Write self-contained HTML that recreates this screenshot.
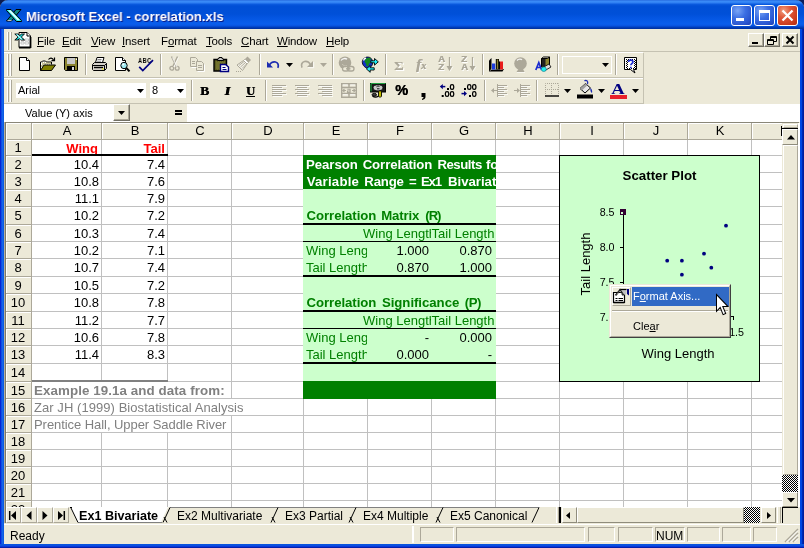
<!DOCTYPE html>
<html><head><meta charset="utf-8"><title>Microsoft Excel - correlation.xls</title>
<style>
html,body{margin:0;padding:0;background:#ECE9D8;}
body{width:804px;height:548px;overflow:hidden;font-family:"Liberation Sans",sans-serif;}
#root{position:relative;width:804px;height:548px;overflow:hidden;background:#ECE9D8;}
#root div{position:absolute;box-sizing:border-box;}
#root svg{position:absolute;overflow:visible;}
.t{white-space:nowrap;font-size:11px;line-height:13px;color:#000;}
.c{white-space:nowrap;font-size:13px;line-height:15px;color:#000;}
.u{text-decoration:underline;}
.hdr{background:#ECE9D8;}
.sunk{border:1px solid;border-color:#ACA899 #fff #fff #ACA899;}
.btn{background:#ECE9D8;border:1px solid;border-color:#fff #716F64 #716F64 #fff;box-shadow:inset -1px -1px 0 #ACA899;}
.t,.c{will-change:transform;}
.btn2{background:#ECE9D8;border:1px solid;border-color:#fff #8F8C7C #8F8C7C #fff;}

</style></head>
<body>
<div id="root">
<div style="left:0px;top:29px;width:4px;height:519px;background:linear-gradient(to right,#0019CF 0,#0831D9 25%,#166AEE 50%,#0855DD 100%);"></div>
<div style="left:800px;top:29px;width:4px;height:519px;background:linear-gradient(to right,#0046E4 0,#0044E0 45%,#0028B4 60%,#001894 100%);"></div>
<div style="left:0px;top:544px;width:804px;height:4px;background:linear-gradient(to bottom,#0855DD 0,#0A4FE0 40%,#0831D9 70%,#00138C 100%);"></div>
<div style="left:0px;top:0px;width:804px;height:29px;background:linear-gradient(to bottom,#1F60D8 0px,#3D8EF8 1px,#2E7EF2 3px,#0C5CE0 4px,#004FD6 6px,#0050D8 14px,#0456E2 18px,#0A5EEC 24px,#0852DE 26px,#0040C0 27px,#002E9A 29px);border-radius:7px 7px 0 0;"></div>
<svg style="left:0;top:0" width="804" height="8"><path d="M0 0h8a8 8 0 0 0-8 8z" fill="#0A1A50"/><path d="M804 0h-8a8 8 0 0 1 8 8z" fill="#0A1D5C"/></svg>
<svg style="left:6px;top:9px" width="16" height="13" viewBox="0 0 16 13">
<path d="M10 0.500h5L5.500 12H0.500z" fill="#108888" stroke="#000" stroke-width="1"/>
<path d="M0.500 0.500h4.500L15.500 11.500v1h-5L0.500 1.500z" fill="#20E0E0" stroke="#000" stroke-width="1"/>
<path d="M2 1.200h2.500L14 11.300h-2.500z" fill="#E8FFFF"/>
<path d="M1.500 11.500h4" stroke="#C0C0C0" stroke-width="1"/>
</svg>
<div class="t ttl" style="left:25.5px;top:8.5px;font-weight:bold;font-size:13.600px;line-height:16px;color:#fff;text-shadow:1px 1px 0 #0A1883;transform-origin:0 0;transform:scaleX(0.962);">Microsoft Excel - correlation.xls</div>
<div style="left:731px;top:5px;width:21px;height:21px;background:radial-gradient(circle at 30% 25%,#7AA5F5 0,#3C6FE3 40%,#2A55CF 75%,#1E3FB4 100%);border:1px solid #fff;border-radius:3px;"></div>
<div style="left:754px;top:5px;width:21px;height:21px;background:radial-gradient(circle at 30% 25%,#7AA5F5 0,#3C6FE3 40%,#2A55CF 75%,#1E3FB4 100%);border:1px solid #fff;border-radius:3px;"></div>
<div style="left:777px;top:5px;width:21px;height:21px;background:radial-gradient(circle at 30% 25%,#F0A080 0,#E0583A 35%,#C93A1C 75%,#B02A10 100%);border:1px solid #fff;border-radius:3px;"></div>
<div style="left:736px;top:18px;width:8px;height:3px;background:#fff;"></div>
<div style="left:759px;top:10px;width:11px;height:11px;border:1px solid #fff;border-top:3px solid #fff;"></div>
<svg style="left:777px;top:5px" width="21" height="21"><path d="M5.5 5.5l10 10M15.5 5.5l-10 10" stroke="#fff" stroke-width="2.3" stroke-linecap="butt"/></svg>
<div style="left:4px;top:29px;width:796px;height:23px;background:#ECE9D8;"></div>
<div style="left:4px;top:51px;width:796px;height:1px;background:#C5C2B2;"></div>
<div style="left:7px;top:32px;width:1px;height:18px;background:#fff;"></div>
<div style="left:8px;top:32px;width:1px;height:18px;background:#ACA899;"></div>
<div style="left:10px;top:32px;width:1px;height:18px;background:#fff;"></div>
<div style="left:11px;top:32px;width:1px;height:18px;background:#ACA899;"></div>
<svg style="left:14px;top:31px" width="18" height="18" viewBox="0 0 18 18">
<path d="M5 1.500h8l3.500 3.500v11.500H5z" fill="#fff" stroke="#000" stroke-width="1"/>
<path d="M5 16.500h11.500M16.500 6v11" stroke="#000" stroke-width="1.800"/>
<path d="M13 1.500v3.500h3.500" fill="#fff" stroke="#000" stroke-width="1"/>
<path d="M7 8h3v2H7zM11 8h3.500v2H11zM7 11h3v2H7zM11 11h3.500v2H11z" fill="none" stroke="#C0C0C0" stroke-width=".9"/>
<path d="M0.800 3h3.200l1.700 1.600L7.500 3h3L7.300 6l3.200 3H7.300L5.600 7.400 4 9H0.800l3.300-3z" fill="#18D0D0" stroke="#000" stroke-width=".9"/>
<path d="M1.800 3.500h1.800l5 5H6.800z" fill="#B0FFFF"/>
</svg>
<div class="t menu" style="left:36.5px;top:35px;font-size:11.500px;letter-spacing:-0.15px;"><span class="u">F</span>ile</div>
<div class="t menu" style="left:61.5px;top:35px;font-size:11.500px;letter-spacing:-0.15px;"><span class="u">E</span>dit</div>
<div class="t menu" style="left:90.5px;top:35px;font-size:11.500px;letter-spacing:-0.15px;"><span class="u">V</span>iew</div>
<div class="t menu" style="left:122px;top:35px;font-size:11.500px;letter-spacing:-0.15px;"><span class="u">I</span>nsert</div>
<div class="t menu" style="left:160.5px;top:35px;font-size:11.500px;letter-spacing:-0.15px;">F<span class="u">o</span>rmat</div>
<div class="t menu" style="left:205.5px;top:35px;font-size:11.500px;letter-spacing:-0.15px;"><span class="u">T</span>ools</div>
<div class="t menu" style="left:240.5px;top:35px;font-size:11.500px;letter-spacing:-0.15px;"><span class="u">C</span>hart</div>
<div class="t menu" style="left:277px;top:35px;font-size:11.500px;letter-spacing:-0.15px;"><span class="u">W</span>indow</div>
<div class="t menu" style="left:325.5px;top:35px;font-size:11.500px;letter-spacing:-0.15px;"><span class="u">H</span>elp</div>
<div class="btn" style="left:748px;top:33px;width:16px;height:14px;"></div>
<div class="btn" style="left:764px;top:33px;width:16px;height:14px;"></div>
<div class="btn" style="left:782px;top:33px;width:16px;height:14px;"></div>
<div style="left:752px;top:42px;width:6px;height:2px;background:#000;"></div>
<svg style="left:764px;top:33px" width="16" height="14"><path d="M6.5 3.5h6v5h-6zM6.5 4.5h6" fill="none" stroke="#000" stroke-width="1"/><path d="M3.5 6.5h6v5h-6z" fill="#ECE9D8" stroke="#000" stroke-width="1"/><path d="M3.5 7.5h6" stroke="#000" stroke-width="1"/></svg>
<svg style="left:782px;top:33px" width="16" height="14"><path d="M4.5 3.5l7 7M11.5 3.5l-7 7" stroke="#000" stroke-width="2"/></svg>
<div style="left:4px;top:52px;width:796px;height:52px;background:#ECE9D8;"></div>
<div style="left:4px;top:52px;width:639px;height:1px;background:#fff;"></div>
<div style="left:4px;top:77px;width:640px;height:1px;background:#C5C2B2;"></div>
<div style="left:4px;top:78px;width:639px;height:1px;background:#fff;"></div>
<div style="left:4px;top:103px;width:640px;height:1px;background:#C5C2B2;"></div>
<div style="left:643px;top:53px;width:1px;height:51px;background:#C5C2B2;"></div>
<div style="left:7px;top:54px;width:1px;height:22px;background:#fff;"></div>
<div style="left:8px;top:54px;width:1px;height:22px;background:#ACA899;"></div>
<div style="left:10px;top:54px;width:1px;height:22px;background:#fff;"></div>
<div style="left:11px;top:54px;width:1px;height:22px;background:#ACA899;"></div>
<div style="left:7px;top:80px;width:1px;height:22px;background:#fff;"></div>
<div style="left:8px;top:80px;width:1px;height:22px;background:#ACA899;"></div>
<div style="left:10px;top:80px;width:1px;height:22px;background:#fff;"></div>
<div style="left:11px;top:80px;width:1px;height:22px;background:#ACA899;"></div>
<svg style="left:18px;top:56px" width="16" height="16" viewBox="0 0 16 16"><path d="M1.5 1.5h7l3 3v10h-10z" fill="#fff" stroke="#000"/><path d="M8.5 1.5v3h3" fill="#fff" stroke="#000"/></svg>
<svg style="left:40px;top:56px" width="16" height="16" viewBox="0 0 16 16"><path d="M8.500 3.500c1.500-2 4-2 5 0.500" fill="none" stroke="#000" stroke-width="1.200"/><path d="M14.500 1.500v3.200h-3" fill="none" stroke="#000" stroke-width="1.200"/><path d="M0.500 14.500v-8.500h1l1-1h3l1 1h5v2.500" fill="#FFFFFF" stroke="#000"/><path d="M2 7h1M4 7h1M6 7h1M8 7h1M10 7h1M3 8h1M5 8h1M7 8h1M9 8h1M2 9h1M2 11h1M1 10h1" stroke="#8A8430" stroke-width="1"/><path d="M0.500 14.500l3.500-5.500h11.500l-4 5.500z" fill="#808000" stroke="#000"/></svg>
<svg style="left:63px;top:56px" width="16" height="16" viewBox="0 0 16 16"><path d="M1.5 1.5h13v13h-12l-1-1z" fill="#8A8430" stroke="#000"/><rect x="4" y="2" width="8" height="6" fill="#C8C8C8"/><rect x="4" y="10" width="8" height="4.5" fill="#000"/><rect x="9" y="11" width="2" height="3" fill="#D8D8D8"/><rect x="12.8" y="2.5" width="1.2" height="1.5" fill="#fff"/></svg>
<div style="left:85px;top:54px;width:1px;height:21px;background:#ACA899;"></div>
<div style="left:86px;top:54px;width:1px;height:21px;background:#fff;"></div>
<svg style="left:91px;top:56px" width="16" height="16" viewBox="0 0 16 16"><path d="M4.5 6.5l1.5-5h7l-1.5 5" fill="#fff" stroke="#000"/><path d="M6.5 3.5h4M6 5.2h4" stroke="#666" stroke-width=".8"/><path d="M1.5 8.5l2-2h11l1 1v5l-2 2h-11l-1-1z" fill="#D4D0C8" stroke="#000"/><path d="M1.5 9.5h12l2-2M13.5 9.5v5" fill="none" stroke="#000"/><path d="M3 11.5h9" stroke="#000" stroke-width="1.4"/><rect x="11" y="12.3" width="1.6" height="1.2" fill="#E8E000"/></svg>
<svg style="left:114px;top:56px" width="16" height="16" viewBox="0 0 16 16"><path d="M1.5 1.5h7l3 3v10h-10z" fill="#fff" stroke="#000"/><path d="M8.5 1.5v3h3" fill="#fff" stroke="#000"/><circle cx="10" cy="9.5" r="3.2" fill="#9EE8F0" stroke="#000"/><path d="M12.3 12l3.2 3.4" stroke="#000" stroke-width="2"/><circle cx="9.2" cy="8.6" r="1" fill="#fff"/></svg>
<div class="t" style="left:138px;top:57px;font-size:7px;line-height:8px;font-weight:bold;letter-spacing:0.4px;transform-origin:0 0;transform:scaleX(0.82);">ABC</div>
<svg style="left:138px;top:56px" width="16" height="16" viewBox="0 0 16 16"><path d="M1.200 10.800l3.600 3.800L15 4.200" fill="none" stroke="#000080" stroke-width="1.700"/></svg>
<div style="left:160px;top:54px;width:1px;height:21px;background:#ACA899;"></div>
<div style="left:161px;top:54px;width:1px;height:21px;background:#fff;"></div>
<svg style="left:169px;top:56px" width="12" height="16" viewBox="0 0 12 16"><path d="M2.500 0.500l4.500 9.500M8.500 0.500L4 10" stroke="#ACA899" stroke-width="1.400" fill="none"/><circle cx="2.800" cy="12.300" r="1.900" fill="none" stroke="#ACA899" stroke-width="1.300"/><circle cx="8.200" cy="12.300" r="1.900" fill="none" stroke="#ACA899" stroke-width="1.300"/><path d="M3.500 1.500l4.500 9.500M9.500 1.500L5 11" stroke="#fff" stroke-width=".8" fill="none" opacity=".9"/></svg>
<svg style="left:189px;top:56px" width="16" height="16" viewBox="0 0 16 16"><path d="M1.5 1.5h5l2 2v7h-7z" fill="none" stroke="#ACA899"/><path d="M7.5 5.5h5l2 2v7h-7z" fill="#ECE9D8" stroke="#ACA899"/><path d="M3 5.5h3M3 7.5h3M9 9.5h4M9 11.5h4" stroke="#ACA899"/><path d="M2.5 11.5h5M8.5 15.5h7v-7" stroke="#fff" fill="none"/></svg>
<svg style="left:213px;top:56px" width="16" height="16" viewBox="0 0 16 16"><path d="M1 3.500h12.500v11.500h-12.500z" fill="#5C5C20" stroke="#000" stroke-width="1.400"/><path d="M4.500 4.500V3l1.500-0.500V1.500h3v1L10.500 3v1.500z" fill="#C8C8C8" stroke="#000"/><path d="M3 6h1M5 6h1M7 6h1M9 6h1M11 6h1M4 7h1M6 7h1M8 7h1M10 7h1M3 8h1M5 8h1M4 9h1M6 9h1M3 10h1M5 10h1M4 11h1M6 11h1M3 12h1M5 12h1M4 13h1M6 13h1" stroke="#8A8A38" stroke-width="1"/><path d="M7.500 8.500h5l3 2.500v4.500h-8z" fill="#fff" stroke="#000080" stroke-width="1.400"/><path d="M9.500 11.500h3M9.500 13.500h4" stroke="#000080" stroke-width="1"/></svg>
<svg style="left:236px;top:56px" width="16" height="16" viewBox="0 0 16 16"><path d="M11.500 0.500L15 4l-2.500 2.500L9 3z" fill="#ACA899"/><path d="M9 3l3.500 3.500-1.500 1.500L7.500 4.500z" fill="#fff" stroke="#ACA899" stroke-width=".8"/><path d="M7.500 4.500L11 8 6.500 14.500 1 9z" fill="#F4F2E8" stroke="#ACA899"/><path d="M3 9.500l5-4M4.500 11l5-4.500M6 12.500l4.500-4.500" stroke="#ACA899" stroke-width=".9"/><path d="M0 15.500h1M2 15.500h1M4 15.500h1" stroke="#ACA899"/></svg>
<div style="left:259px;top:54px;width:1px;height:21px;background:#ACA899;"></div>
<div style="left:260px;top:54px;width:1px;height:21px;background:#fff;"></div>
<svg style="left:266px;top:56px" width="16" height="16" viewBox="0 0 16 16"><path d="M1 5.500v6h6z" fill="#1C2CB0"/><path d="M3.500 9.500C4 6.500 7 5.500 9.500 6c2.500.6 3.500 3 2.300 5.800" fill="none" stroke="#1C2CB0" stroke-width="1.700"/></svg>
<svg style="left:286px;top:63px" width="7" height="4"><path d="M0 0h7L3.500 4z" fill="#000"/></svg>
<svg style="left:299px;top:56px" width="16" height="16" viewBox="0 0 16 16"><path d="M14 5v6H8z" fill="#ACA899"/><path d="M11.5 9.5C11 6 8 5 5.500 5.500 3 6.100 1.700 8.700 3 11.700" fill="none" stroke="#ACA899" stroke-width="1.7"/><path d="M14.700 6v5.700H9" stroke="#fff" fill="none" stroke-width=".8"/></svg>
<svg style="left:320px;top:63px" width="7" height="4"><path d="M0 0h7L3.500 4z" fill="#ACA899"/></svg>
<div style="left:332px;top:54px;width:1px;height:21px;background:#ACA899;"></div>
<div style="left:333px;top:54px;width:1px;height:21px;background:#fff;"></div>
<svg style="left:338px;top:56px" width="17" height="16" viewBox="0 0 17 16"><circle cx="7" cy="6.800" r="6.300" fill="#ACA899"/><path d="M3 4.500C4.500 2.300 7.500 2 9 3.200" stroke="#fff" fill="none" stroke-width="1.300" opacity=".9"/><path d="M4 8c1 1.500 3 2 5 1.500" stroke="#C8C4B4" fill="none" stroke-width="1"/><rect x="4.500" y="10.500" width="6.500" height="4.500" rx="2.200" fill="#ECE9D8" stroke="#ACA899" stroke-width="1.300"/><rect x="9.500" y="10.500" width="6.500" height="4.500" rx="2.200" fill="none" stroke="#ACA899" stroke-width="1.300"/><path d="M8 12.800h4.500" stroke="#ACA899" stroke-width="1.300"/></svg>
<svg style="left:362px;top:56px" width="17" height="18" viewBox="0 0 17 18"><path d="M0.300 5.500C0.800 2.500 3.500 0.800 6 1c2.500.2 4.500 2 4.700 5 .2 3-1.500 5.800-4.700 6.500C3.500 12 0 9.500 0.300 5.500z" fill="#1030C8" stroke="#000" stroke-width=".8"/><path d="M3 4c1-2 3.500-2.800 6-1.500L8 5.500l1 1.500-2 .5-.5 2.500-2 .5-.5-3L2.500 6z" fill="#108820"/><path d="M1.500 4.500C2 3 3 2.200 4 2" stroke="#fff" stroke-width="1.300" fill="none"/><path d="M8.800 4.800h3.700V2.500l3.800 3.300-3.800 3.400V6.800H8.800z" fill="#20F0F8" stroke="#000" stroke-width=".9"/><path d="M12.200 11.800H8.200V9.500l-3.800 3.400 3.800 3.400V14h4z" fill="#20F0F8" stroke="#000" stroke-width=".9"/></svg>
<div style="left:385px;top:54px;width:1px;height:21px;background:#ACA899;"></div>
<div style="left:386px;top:54px;width:1px;height:21px;background:#fff;"></div>
<div class="t" style="left:393.500px;top:57px;font-size:13px;line-height:17px;font-weight:bold;transform-origin:0 0;transform:scaleX(1.15);color:#ACA899;font-family:'Liberation Serif',serif;text-shadow:1px 1px 0 #fff;">&Sigma;</div>
<div class="t" style="left:416px;top:55px;font-size:15px;line-height:18px;color:#ACA899;font-family:'Liberation Serif',serif;font-style:italic;font-weight:bold;text-shadow:0.5px 0 0 #ACA899,1px 1px 0 #fff;">f<span style="font-size:10px;">x</span></div>
<div class="t" style="left:438px;top:55px;font-size:9.500px;line-height:8px;font-weight:bold;color:#ACA899;text-shadow:0.4px 0 0 #ACA899,1px 1px 0 #fff;">A<br>Z</div>
<svg style="left:445px;top:56px" width="9" height="16" viewBox="0 0 9 16"><path d="M4.500 1v11" stroke="#ACA899" stroke-width="1.300"/><path d="M1.500 10h6l-3 5z" fill="#ACA899"/><path d="M5.500 2v8M8 10.500l-3 5" stroke="#fff" stroke-width=".7" fill="none"/></svg>
<div class="t" style="left:461px;top:55px;font-size:9.500px;line-height:8px;font-weight:bold;color:#ACA899;text-shadow:0.4px 0 0 #ACA899,1px 1px 0 #fff;">Z<br>A</div>
<svg style="left:468px;top:56px" width="9" height="16" viewBox="0 0 9 16"><path d="M4.500 1v11" stroke="#ACA899" stroke-width="1.300"/><path d="M1.500 10h6l-3 5z" fill="#ACA899"/><path d="M5.500 2v8M8 10.500l-3 5" stroke="#fff" stroke-width=".7" fill="none"/></svg>
<div style="left:482px;top:54px;width:1px;height:21px;background:#ACA899;"></div>
<div style="left:483px;top:54px;width:1px;height:21px;background:#fff;"></div>
<svg style="left:488px;top:57px" width="16" height="16" viewBox="0 0 16 16"><path d="M1 14.500V3.500L3.500 1v11z" fill="#000"/><path d="M1 14.500l2.500-2.500H16l-1.500 2.500z" fill="#000"/><path d="M2.500 13.200l1.200-1h11" stroke="#fff" stroke-width=".8" fill="none"/><rect x="4" y="6.500" width="3.200" height="6" fill="#1C3CE0"/><rect x="7.800" y="2" width="3.200" height="10.500" fill="#000"/><rect x="8.800" y="2.500" width="1.400" height="9.500" fill="#8A8430"/><rect x="11.600" y="4.500" width="3.400" height="8" fill="#E81C1C"/><rect x="11" y="4.500" width="1" height="8" fill="#000"/></svg>
<svg style="left:513px;top:57px" width="16" height="16" viewBox="0 0 16 16"><circle cx="7.500" cy="6.500" r="6.300" fill="#ACA899"/><path d="M4 3.500C5.500 1.800 8 1.800 9 2.800" stroke="#fff" fill="none" stroke-width="1.300" opacity=".85"/><path d="M5.500 12h4.500l1.500 3h-8z" fill="#ACA899"/><path d="M4 15.500h8" stroke="#fff" stroke-width=".8" opacity=".8"/></svg>
<svg style="left:535px;top:56px" width="17" height="16" viewBox="0 0 17 16"><path d="M6.500 2.500h6l2-1.500v8.500l-2 1.500h-6z" fill="#8A8430" stroke="#000"/><path d="M6.500 2.500l2-1.500h6" fill="none" stroke="#000"/><rect x="7" y="3" width="3.500" height="7.500" fill="#202020"/><path d="M0.800 14l3-7.500 2.800 7.500M2 11.500h3.500" fill="none" stroke="#1C2CD0" stroke-width="1.700"/><path d="M8 11.500l6-3.500 2 3-6 3.500z" fill="#E0E0E0" stroke="#000" stroke-width=".8"/><ellipse cx="8.800" cy="13.200" rx="2.500" ry="2.300" fill="#20F0F0" stroke="#0A7080" stroke-width=".6"/></svg>
<div style="left:557px;top:54px;width:1px;height:21px;background:#ACA899;"></div>
<div style="left:558px;top:54px;width:1px;height:21px;background:#fff;"></div>
<div style="left:562px;top:56px;width:50px;height:18px;border:1px solid #fff;background:#ECE9D8;"></div>
<svg style="left:602px;top:63px" width="7" height="4"><path d="M0 0h7L3.500 4z" fill="#000"/></svg>
<div style="left:615px;top:54px;width:1px;height:21px;background:#ACA899;"></div>
<div style="left:616px;top:54px;width:1px;height:21px;background:#fff;"></div>
<svg style="left:624px;top:57px" width="15" height="17" viewBox="0 0 15 17"><path d="M0.500 0.500h12v12h-3l1.500 3.500-4.500-3.500h-6z" fill="#fff" stroke="#000"/><path d="M2 2h1v1h-1zM4 2h1v1h-1zM6 2h1v1h-1zM8 2h1v1h-1zM10 2h1v1h-1zM3 3h1v1h-1zM11 3h1v1h-1zM2 4h1v1h-1zM10 4h1v1h-1zM3 5h1v1h-1zM11 5h1v1h-1zM2 6h1v1h-1zM10 6h1v1h-1zM3 7h1v1h-1zM11 7h1v1h-1zM2 8h1v1h-1zM10 8h1v1h-1zM3 9h1v1h-1zM11 9h1v1h-1zM2 10h1v1h-1zM10 10h1v1h-1zM3 11h1v1h-1zM5 11h1v1h-1zM7 11h1v1h-1zM9 11h1v1h-1zM11 11h1v1h-1z" fill="#000"/><path d="M4.500 5c0-2.500 4.500-2.500 4.500 0 0 1.500-2.200 1.500-2.200 3.200M6.800 9.800v1.500" fill="none" stroke="#1C2CD0" stroke-width="1.600"/></svg>
<div style="left:16px;top:83px;width:130px;height:15px;background:#fff;"></div>
<div class="t" style="left:18px;top:84px;">Arial</div>
<svg style="left:137px;top:89px" width="7" height="4"><path d="M0 0h7L3.500 4z" fill="#000"/></svg>
<div style="left:150px;top:83px;width:36px;height:15px;background:#fff;"></div>
<div class="t" style="left:152px;top:84px;">8</div>
<svg style="left:177px;top:89px" width="7" height="4"><path d="M0 0h7L3.500 4z" fill="#000"/></svg>
<div style="left:191px;top:80px;width:1px;height:21px;background:#ACA899;"></div>
<div style="left:192px;top:80px;width:1px;height:21px;background:#fff;"></div>
<div class="t" style="left:198px;top:82px;font-family:'Liberation Serif',serif;font-weight:bold;font-size:13.5px;line-height:17px;width:13px;text-align:center;text-shadow:0.5px 0 0 #000;">B</div>
<div class="t" style="left:221px;top:82px;font-family:'Liberation Serif',serif;font-weight:bold;font-style:italic;font-size:13.5px;line-height:17px;width:13px;text-align:center;text-shadow:0.6px 0 0 #000,-0.4px 0 0 #000;">I</div>
<div class="t" style="left:244px;top:82.5px;font-family:'Liberation Serif',serif;font-weight:bold;font-size:12.5px;line-height:16px;width:13px;text-align:center;text-shadow:0.4px 0 0 #000;">U</div>
<div style="left:246px;top:96px;width:9px;height:1px;background:#000;"></div>
<div style="left:265px;top:80px;width:1px;height:21px;background:#ACA899;"></div>
<div style="left:266px;top:80px;width:1px;height:21px;background:#fff;"></div>
<svg style="left:272px;top:84px" width="15" height="14" viewBox="0 0 15 14"><rect x="0" y="1" width="14" height="1" fill="#ACA899"/><rect x="1" y="2" width="14" height="1" fill="#fff" opacity=".8"/><rect x="0" y="3" width="10" height="1" fill="#ACA899"/><rect x="1" y="4" width="10" height="1" fill="#fff" opacity=".8"/><rect x="0" y="5" width="14" height="1" fill="#ACA899"/><rect x="1" y="6" width="14" height="1" fill="#fff" opacity=".8"/><rect x="0" y="7" width="10" height="1" fill="#ACA899"/><rect x="1" y="8" width="10" height="1" fill="#fff" opacity=".8"/><rect x="0" y="9" width="14" height="1" fill="#ACA899"/><rect x="1" y="10" width="14" height="1" fill="#fff" opacity=".8"/><rect x="0" y="11" width="10" height="1" fill="#ACA899"/><rect x="1" y="12" width="10" height="1" fill="#fff" opacity=".8"/></svg>
<svg style="left:295px;top:84px" width="15" height="14" viewBox="0 0 15 14"><rect x="0.0" y="1" width="14" height="1" fill="#ACA899"/><rect x="1.0" y="2" width="14" height="1" fill="#fff" opacity=".8"/><rect x="2.0" y="3" width="10" height="1" fill="#ACA899"/><rect x="3.0" y="4" width="10" height="1" fill="#fff" opacity=".8"/><rect x="0.0" y="5" width="14" height="1" fill="#ACA899"/><rect x="1.0" y="6" width="14" height="1" fill="#fff" opacity=".8"/><rect x="2.0" y="7" width="10" height="1" fill="#ACA899"/><rect x="3.0" y="8" width="10" height="1" fill="#fff" opacity=".8"/><rect x="0.0" y="9" width="14" height="1" fill="#ACA899"/><rect x="1.0" y="10" width="14" height="1" fill="#fff" opacity=".8"/><rect x="2.0" y="11" width="10" height="1" fill="#ACA899"/><rect x="3.0" y="12" width="10" height="1" fill="#fff" opacity=".8"/></svg>
<svg style="left:318px;top:84px" width="15" height="14" viewBox="0 0 15 14"><rect x="0" y="1" width="14" height="1" fill="#ACA899"/><rect x="1" y="2" width="14" height="1" fill="#fff" opacity=".8"/><rect x="4" y="3" width="10" height="1" fill="#ACA899"/><rect x="5" y="4" width="10" height="1" fill="#fff" opacity=".8"/><rect x="0" y="5" width="14" height="1" fill="#ACA899"/><rect x="1" y="6" width="14" height="1" fill="#fff" opacity=".8"/><rect x="4" y="7" width="10" height="1" fill="#ACA899"/><rect x="5" y="8" width="10" height="1" fill="#fff" opacity=".8"/><rect x="0" y="9" width="14" height="1" fill="#ACA899"/><rect x="1" y="10" width="14" height="1" fill="#fff" opacity=".8"/><rect x="4" y="11" width="10" height="1" fill="#ACA899"/><rect x="5" y="12" width="10" height="1" fill="#fff" opacity=".8"/></svg>
<svg style="left:341px;top:83px" width="16" height="15" viewBox="0 0 16 15"><path d="M0.700 0.700h14.600v13.600H0.700zM0.700 4.500h14.600M0.700 10.500h14.600M8 0.700v3.800M8 10.500v3.800" fill="none" stroke="#ACA899" stroke-width="1.400"/><path d="M1.500 7.500h3.500M11 7.500h3.500" stroke="#ACA899" stroke-width="1.200"/><path d="M3.500 5.800L1.800 7.500l1.700 1.700M12.500 5.800l1.700 1.700-1.700 1.700" fill="none" stroke="#ACA899" stroke-width="1.100"/><path d="M6.300 6.300h2.800v3.200H6.500v-1.500h2.600" fill="none" stroke="#ACA899" stroke-width="1.100"/><path d="M1.800 1.900h5M9.200 1.900h5M1.800 11.700h5M9.200 11.700h5" stroke="#fff" stroke-width=".9" opacity=".9"/></svg>
<div style="left:363px;top:80px;width:1px;height:21px;background:#ACA899;"></div>
<div style="left:364px;top:80px;width:1px;height:21px;background:#fff;"></div>
<svg style="left:370px;top:82px" width="16" height="16" viewBox="0 0 16 16"><rect x="0.500" y="1.500" width="15" height="8.500" fill="#181818" stroke="#000"/><path d="M1 1.500h14.500M1 1.500v8" stroke="#20A040" stroke-width="1.200" fill="none"/><ellipse cx="8" cy="5.800" rx="5" ry="3.100" fill="#C8C8C8" stroke="#000" stroke-width=".8"/><path d="M6.500 4.800c1-1 2.500-1 3 0M7 6.800h2.500" stroke="#000" stroke-width=".9" fill="none"/><ellipse cx="4.300" cy="12.800" rx="2.300" ry="1.400" fill="#404040" stroke="#000" stroke-width=".9"/><rect x="8.500" y="9" width="3" height="6" rx="1" fill="#E8E000" stroke="#000" stroke-width=".9"/><path d="M9 11h2M9 13h2" stroke="#808000" stroke-width=".8"/><path d="M2.500 14c2 1.500 4 1.500 6 0" stroke="#000" fill="none" stroke-width="1.200"/></svg>
<div class="t" style="left:394.500px;top:82px;font-weight:bold;font-size:14.500px;line-height:17px;text-shadow:0.5px 0 0 #000;">%</div>
<svg style="left:421px;top:93px" width="5" height="8" viewBox="0 0 5 8"><path d="M0.500 0h4v4c0 1.500-1.500 2.500-3.500 3v-1.200c1-.3 1.500-.8 1.500-1.800H0.500z" fill="#000"/></svg>
<svg style="left:439px;top:84px" width="16" height="14" viewBox="0 0 16 14"><path d="M6.300 2.600H2.500" stroke="#000080" stroke-width="1.500"/><path d="M3.800 0L0.800 2.600 3.800 5.200z" fill="#000080"/><rect x="8" y="4" width="2" height="2" fill="#000"/><rect x="11.4" y="0.6" width="3.300" height="4.800" rx="1.600" fill="none" stroke="#000" stroke-width="1.250"/><rect x="2.7" y="11" width="2" height="2" fill="#000"/><rect x="6.3999999999999995" y="7.6" width="3.300" height="4.800" rx="1.600" fill="none" stroke="#000" stroke-width="1.250"/><rect x="11.4" y="7.6" width="3.300" height="4.800" rx="1.600" fill="none" stroke="#000" stroke-width="1.250"/></svg>
<svg style="left:461px;top:84px" width="17" height="14" viewBox="0 0 17 14"><path d="M0.500 9.600H4.300" stroke="#000080" stroke-width="1.500"/><path d="M3 7L6 9.600 3 12.200z" fill="#000080"/><rect x="3" y="4" width="2" height="2" fill="#000"/><rect x="6.6" y="0.6" width="3.300" height="4.800" rx="1.600" fill="none" stroke="#000" stroke-width="1.250"/><rect x="11.6" y="0.6" width="3.300" height="4.800" rx="1.600" fill="none" stroke="#000" stroke-width="1.250"/><rect x="8" y="11" width="2" height="2" fill="#000"/><rect x="11.6" y="7.6" width="3.300" height="4.800" rx="1.600" fill="none" stroke="#000" stroke-width="1.250"/></svg>
<div style="left:484px;top:80px;width:1px;height:21px;background:#ACA899;"></div>
<div style="left:485px;top:80px;width:1px;height:21px;background:#fff;"></div>
<svg style="left:491px;top:84px" width="16" height="14" viewBox="0 0 16 14"><rect x="6" y="1" width="10" height="1" fill="#ACA899"/><rect x="7" y="2" width="10" height="1" fill="#fff" opacity=".7"/><rect x="6" y="3" width="7" height="1" fill="#ACA899"/><rect x="7" y="4" width="7" height="1" fill="#fff" opacity=".7"/><rect x="6" y="5" width="10" height="1" fill="#ACA899"/><rect x="7" y="6" width="10" height="1" fill="#fff" opacity=".7"/><rect x="6" y="7" width="7" height="1" fill="#ACA899"/><rect x="7" y="8" width="7" height="1" fill="#fff" opacity=".7"/><rect x="6" y="9" width="10" height="1" fill="#ACA899"/><rect x="7" y="10" width="10" height="1" fill="#fff" opacity=".7"/><rect x="6" y="11" width="7" height="1" fill="#ACA899"/><rect x="7" y="12" width="7" height="1" fill="#fff" opacity=".7"/><path d="M2 6.500h4" stroke="#ACA899"/><path d="M3 4L0 6.500 3 9z" fill="#ACA899"/><path d="M6.500 0v14" stroke="#ACA899" stroke-dasharray="1 1"/></svg>
<svg style="left:514px;top:84px" width="16" height="14" viewBox="0 0 16 14"><rect x="6" y="1" width="10" height="1" fill="#ACA899"/><rect x="7" y="2" width="10" height="1" fill="#fff" opacity=".7"/><rect x="6" y="3" width="7" height="1" fill="#ACA899"/><rect x="7" y="4" width="7" height="1" fill="#fff" opacity=".7"/><rect x="6" y="5" width="10" height="1" fill="#ACA899"/><rect x="7" y="6" width="10" height="1" fill="#fff" opacity=".7"/><rect x="6" y="7" width="7" height="1" fill="#ACA899"/><rect x="7" y="8" width="7" height="1" fill="#fff" opacity=".7"/><rect x="6" y="9" width="10" height="1" fill="#ACA899"/><rect x="7" y="10" width="10" height="1" fill="#fff" opacity=".7"/><rect x="6" y="11" width="7" height="1" fill="#ACA899"/><rect x="7" y="12" width="7" height="1" fill="#fff" opacity=".7"/><path d="M0 6.500h4" stroke="#ACA899"/><path d="M3 4l3 2.500-3 2.500z" fill="#ACA899"/><path d="M6.500 0v14" stroke="#ACA899" stroke-dasharray="1 1"/></svg>
<div style="left:536px;top:80px;width:1px;height:21px;background:#ACA899;"></div>
<div style="left:537px;top:80px;width:1px;height:21px;background:#fff;"></div>
<svg style="left:545px;top:83px" width="14" height="14" viewBox="0 0 14 14"><path d="M0.500 0.500h13M0.500 0.500v12M6.500 0.500v12M13.500 0.500v12M0.500 6.500h13" stroke="#ACA899" stroke-dasharray="1 1" stroke-dashoffset="0.5" fill="none"/><path d="M0 13h14" stroke="#000" stroke-width="1.400"/></svg>
<svg style="left:564px;top:89px" width="7" height="4"><path d="M0 0h7L3.500 4z" fill="#000"/></svg>
<svg style="left:577px;top:80px" width="16" height="19" viewBox="0 0 16 19"><path d="M7.500 1c1.500-1.500 4 0 3 3" fill="none" stroke="#1C2CB0" stroke-width="1.300"/><path d="M3 8.500l5.500-5 5 4.500-5.500 5z" fill="#E8E8E8" stroke="#000"/><path d="M3 8.500l5.500-5 2 1.800-5.500 5z" fill="#A0A0A0"/><path d="M13.500 8c1.500 1 2 3 1.500 5-1.500-.5-2-3-1.500-5z" fill="#1C2CB0"/><rect x="0" y="14.500" width="16" height="4" fill="#000"/></svg>
<svg style="left:598px;top:89px" width="7" height="4"><path d="M0 0h7L3.500 4z" fill="#000"/></svg>
<div class="t" style="left:611px;top:79.5px;font-family:'Liberation Serif',serif;font-weight:bold;font-size:15.500px;line-height:17px;color:#000080;width:14px;text-align:center;transform:scaleX(1.2);">A</div>
<div style="left:610px;top:95px;width:17px;height:4px;background:#E8202A;"></div>
<svg style="left:632px;top:89px" width="7" height="4"><path d="M0 0h7L3.500 4z" fill="#000"/></svg>
<div style="left:4px;top:104px;width:796px;height:18px;background:#ECE9D8;"></div>
<div style="left:4px;top:104px;width:126px;height:18px;background:#fff;"></div>
<div class="t nb" style="left:25px;top:107px;">Value (Y) axis</div>
<div class="btn" style="left:113px;top:104px;width:17px;height:17px;"></div>
<svg style="left:118px;top:111px" width="7" height="4"><path d="M0 0h7L3.500 4z" fill="#000"/></svg>
<div style="left:175px;top:110px;width:7px;height:2px;background:#000;"></div>
<div style="left:175px;top:113px;width:7px;height:2px;background:#000;"></div>
<div style="left:175px;top:112px;width:7px;height:1px;background:#ECE9D8;"></div>
<div style="left:187px;top:104px;width:613px;height:18px;background:#fff;"></div>
<div style="left:4px;top:122px;width:795px;height:1px;background:#8A8778;"></div>
<div style="left:4px;top:123px;width:778px;height:384px;background:#fff;"></div>
<div style="left:101px;top:140px;width:1px;height:367px;background:#C0C0C0;"></div>
<div style="left:167px;top:140px;width:1px;height:367px;background:#C0C0C0;"></div>
<div style="left:231px;top:140px;width:1px;height:367px;background:#C0C0C0;"></div>
<div style="left:303px;top:140px;width:1px;height:367px;background:#C0C0C0;"></div>
<div style="left:367px;top:140px;width:1px;height:367px;background:#C0C0C0;"></div>
<div style="left:431px;top:140px;width:1px;height:367px;background:#C0C0C0;"></div>
<div style="left:495px;top:140px;width:1px;height:367px;background:#C0C0C0;"></div>
<div style="left:559px;top:140px;width:1px;height:367px;background:#C0C0C0;"></div>
<div style="left:623px;top:140px;width:1px;height:367px;background:#C0C0C0;"></div>
<div style="left:687px;top:140px;width:1px;height:367px;background:#C0C0C0;"></div>
<div style="left:751px;top:140px;width:1px;height:367px;background:#C0C0C0;"></div>
<div style="left:32px;top:155px;width:750px;height:1px;background:#C0C0C0;"></div>
<div style="left:32px;top:172px;width:750px;height:1px;background:#C0C0C0;"></div>
<div style="left:32px;top:189px;width:750px;height:1px;background:#C0C0C0;"></div>
<div style="left:32px;top:206px;width:750px;height:1px;background:#C0C0C0;"></div>
<div style="left:32px;top:224px;width:750px;height:1px;background:#C0C0C0;"></div>
<div style="left:32px;top:241px;width:750px;height:1px;background:#C0C0C0;"></div>
<div style="left:32px;top:258px;width:750px;height:1px;background:#C0C0C0;"></div>
<div style="left:32px;top:276px;width:750px;height:1px;background:#C0C0C0;"></div>
<div style="left:32px;top:293px;width:750px;height:1px;background:#C0C0C0;"></div>
<div style="left:32px;top:311px;width:750px;height:1px;background:#C0C0C0;"></div>
<div style="left:32px;top:328px;width:750px;height:1px;background:#C0C0C0;"></div>
<div style="left:32px;top:345px;width:750px;height:1px;background:#C0C0C0;"></div>
<div style="left:32px;top:363px;width:750px;height:1px;background:#C0C0C0;"></div>
<div style="left:32px;top:381px;width:750px;height:1px;background:#C0C0C0;"></div>
<div style="left:32px;top:398px;width:750px;height:1px;background:#C0C0C0;"></div>
<div style="left:32px;top:415px;width:750px;height:1px;background:#C0C0C0;"></div>
<div style="left:32px;top:432px;width:750px;height:1px;background:#C0C0C0;"></div>
<div style="left:32px;top:449px;width:750px;height:1px;background:#C0C0C0;"></div>
<div style="left:32px;top:466px;width:750px;height:1px;background:#C0C0C0;"></div>
<div style="left:32px;top:483px;width:750px;height:1px;background:#C0C0C0;"></div>
<div style="left:32px;top:500px;width:750px;height:1px;background:#C0C0C0;"></div>
<div style="left:32px;top:382px;width:271px;height:50px;background:#fff;"></div>
<div style="left:32px;top:398px;width:271px;height:1px;background:#C0C0C0;"></div>
<div style="left:32px;top:415px;width:271px;height:1px;background:#C0C0C0;"></div>
<div style="left:231px;top:382px;width:1px;height:16px;background:#C0C0C0;"></div>
<div style="left:231px;top:416px;width:1px;height:16px;background:#C0C0C0;"></div>
<div style="left:4px;top:123px;width:778px;height:16px;background:#ECE9D8;"></div>
<div style="left:4px;top:139px;width:778px;height:1px;background:#ACA899;"></div>
<div style="left:4px;top:123px;width:778px;height:1px;background:#fff;"></div>
<div style="left:31px;top:123px;width:1px;height:16px;background:#ACA899;"></div>
<div style="left:32px;top:123px;width:1px;height:16px;background:#fff;"></div>
<div class="c" style="left:32px;top:123px;width:69px;height:16px;overflow:hidden;font-size:13px;line-height:15px;"><div style="left:0;top:0;width:70px;text-align:center;">A</div></div>
<div style="left:101px;top:123px;width:1px;height:16px;background:#ACA899;"></div>
<div style="left:102px;top:123px;width:1px;height:16px;background:#fff;"></div>
<div class="c" style="left:102px;top:123px;width:65px;height:16px;overflow:hidden;font-size:13px;line-height:15px;"><div style="left:0;top:0;width:66px;text-align:center;">B</div></div>
<div style="left:167px;top:123px;width:1px;height:16px;background:#ACA899;"></div>
<div style="left:168px;top:123px;width:1px;height:16px;background:#fff;"></div>
<div class="c" style="left:168px;top:123px;width:63px;height:16px;overflow:hidden;font-size:13px;line-height:15px;"><div style="left:0;top:0;width:64px;text-align:center;">C</div></div>
<div style="left:231px;top:123px;width:1px;height:16px;background:#ACA899;"></div>
<div style="left:232px;top:123px;width:1px;height:16px;background:#fff;"></div>
<div class="c" style="left:232px;top:123px;width:71px;height:16px;overflow:hidden;font-size:13px;line-height:15px;"><div style="left:0;top:0;width:72px;text-align:center;">D</div></div>
<div style="left:303px;top:123px;width:1px;height:16px;background:#ACA899;"></div>
<div style="left:304px;top:123px;width:1px;height:16px;background:#fff;"></div>
<div class="c" style="left:304px;top:123px;width:63px;height:16px;overflow:hidden;font-size:13px;line-height:15px;"><div style="left:0;top:0;width:64px;text-align:center;">E</div></div>
<div style="left:367px;top:123px;width:1px;height:16px;background:#ACA899;"></div>
<div style="left:368px;top:123px;width:1px;height:16px;background:#fff;"></div>
<div class="c" style="left:368px;top:123px;width:63px;height:16px;overflow:hidden;font-size:13px;line-height:15px;"><div style="left:0;top:0;width:64px;text-align:center;">F</div></div>
<div style="left:431px;top:123px;width:1px;height:16px;background:#ACA899;"></div>
<div style="left:432px;top:123px;width:1px;height:16px;background:#fff;"></div>
<div class="c" style="left:432px;top:123px;width:63px;height:16px;overflow:hidden;font-size:13px;line-height:15px;"><div style="left:0;top:0;width:64px;text-align:center;">G</div></div>
<div style="left:495px;top:123px;width:1px;height:16px;background:#ACA899;"></div>
<div style="left:496px;top:123px;width:1px;height:16px;background:#fff;"></div>
<div class="c" style="left:496px;top:123px;width:63px;height:16px;overflow:hidden;font-size:13px;line-height:15px;"><div style="left:0;top:0;width:64px;text-align:center;">H</div></div>
<div style="left:559px;top:123px;width:1px;height:16px;background:#ACA899;"></div>
<div style="left:560px;top:123px;width:1px;height:16px;background:#fff;"></div>
<div class="c" style="left:560px;top:123px;width:63px;height:16px;overflow:hidden;font-size:13px;line-height:15px;"><div style="left:0;top:0;width:64px;text-align:center;">I</div></div>
<div style="left:623px;top:123px;width:1px;height:16px;background:#ACA899;"></div>
<div style="left:624px;top:123px;width:1px;height:16px;background:#fff;"></div>
<div class="c" style="left:624px;top:123px;width:63px;height:16px;overflow:hidden;font-size:13px;line-height:15px;"><div style="left:0;top:0;width:64px;text-align:center;">J</div></div>
<div style="left:687px;top:123px;width:1px;height:16px;background:#ACA899;"></div>
<div style="left:688px;top:123px;width:1px;height:16px;background:#fff;"></div>
<div class="c" style="left:688px;top:123px;width:63px;height:16px;overflow:hidden;font-size:13px;line-height:15px;"><div style="left:0;top:0;width:64px;text-align:center;">K</div></div>
<div style="left:751px;top:123px;width:1px;height:16px;background:#ACA899;"></div>
<div style="left:752px;top:123px;width:1px;height:16px;background:#fff;"></div>
<div class="c" style="left:752px;top:123px;width:30px;height:16px;overflow:hidden;font-size:13px;line-height:15px;"><div style="left:0;top:0;width:64px;text-align:center;">L</div></div>
<div style="left:4px;top:140px;width:27px;height:367px;background:#ECE9D8;"></div>
<div style="left:31px;top:140px;width:1px;height:367px;background:#ACA899;"></div>
<div style="left:6px;top:123px;width:1px;height:384px;background:#fff;"></div>
<div style="left:4px;top:155px;width:27px;height:1px;background:#ACA899;"></div>
<div style="left:6px;top:140px;width:25px;height:1px;background:#fff;"></div>
<div class="c" style="left:5px;top:140px;width:26px;height:15px;overflow:hidden;text-align:center;font-size:13px;line-height:15px;">1</div>
<div style="left:4px;top:172px;width:27px;height:1px;background:#ACA899;"></div>
<div style="left:6px;top:156px;width:25px;height:1px;background:#fff;"></div>
<div class="c" style="left:5px;top:157px;width:26px;height:15px;overflow:hidden;text-align:center;font-size:13px;line-height:15px;">2</div>
<div style="left:4px;top:189px;width:27px;height:1px;background:#ACA899;"></div>
<div style="left:6px;top:173px;width:25px;height:1px;background:#fff;"></div>
<div class="c" style="left:5px;top:174px;width:26px;height:15px;overflow:hidden;text-align:center;font-size:13px;line-height:15px;">3</div>
<div style="left:4px;top:206px;width:27px;height:1px;background:#ACA899;"></div>
<div style="left:6px;top:190px;width:25px;height:1px;background:#fff;"></div>
<div class="c" style="left:5px;top:191px;width:26px;height:15px;overflow:hidden;text-align:center;font-size:13px;line-height:15px;">4</div>
<div style="left:4px;top:224px;width:27px;height:1px;background:#ACA899;"></div>
<div style="left:6px;top:207px;width:25px;height:1px;background:#fff;"></div>
<div class="c" style="left:5px;top:208px;width:26px;height:15px;overflow:hidden;text-align:center;font-size:13px;line-height:15px;">5</div>
<div style="left:4px;top:241px;width:27px;height:1px;background:#ACA899;"></div>
<div style="left:6px;top:225px;width:25px;height:1px;background:#fff;"></div>
<div class="c" style="left:5px;top:226px;width:26px;height:15px;overflow:hidden;text-align:center;font-size:13px;line-height:15px;">6</div>
<div style="left:4px;top:258px;width:27px;height:1px;background:#ACA899;"></div>
<div style="left:6px;top:242px;width:25px;height:1px;background:#fff;"></div>
<div class="c" style="left:5px;top:243px;width:26px;height:15px;overflow:hidden;text-align:center;font-size:13px;line-height:15px;">7</div>
<div style="left:4px;top:276px;width:27px;height:1px;background:#ACA899;"></div>
<div style="left:6px;top:259px;width:25px;height:1px;background:#fff;"></div>
<div class="c" style="left:5px;top:260px;width:26px;height:15px;overflow:hidden;text-align:center;font-size:13px;line-height:15px;">8</div>
<div style="left:4px;top:293px;width:27px;height:1px;background:#ACA899;"></div>
<div style="left:6px;top:277px;width:25px;height:1px;background:#fff;"></div>
<div class="c" style="left:5px;top:278px;width:26px;height:15px;overflow:hidden;text-align:center;font-size:13px;line-height:15px;">9</div>
<div style="left:4px;top:311px;width:27px;height:1px;background:#ACA899;"></div>
<div style="left:6px;top:294px;width:25px;height:1px;background:#fff;"></div>
<div class="c" style="left:5px;top:295px;width:26px;height:15px;overflow:hidden;text-align:center;font-size:13px;line-height:15px;">10</div>
<div style="left:4px;top:328px;width:27px;height:1px;background:#ACA899;"></div>
<div style="left:6px;top:312px;width:25px;height:1px;background:#fff;"></div>
<div class="c" style="left:5px;top:313px;width:26px;height:15px;overflow:hidden;text-align:center;font-size:13px;line-height:15px;">11</div>
<div style="left:4px;top:345px;width:27px;height:1px;background:#ACA899;"></div>
<div style="left:6px;top:329px;width:25px;height:1px;background:#fff;"></div>
<div class="c" style="left:5px;top:330px;width:26px;height:15px;overflow:hidden;text-align:center;font-size:13px;line-height:15px;">12</div>
<div style="left:4px;top:363px;width:27px;height:1px;background:#ACA899;"></div>
<div style="left:6px;top:346px;width:25px;height:1px;background:#fff;"></div>
<div class="c" style="left:5px;top:347px;width:26px;height:15px;overflow:hidden;text-align:center;font-size:13px;line-height:15px;">13</div>
<div style="left:4px;top:381px;width:27px;height:1px;background:#ACA899;"></div>
<div style="left:6px;top:364px;width:25px;height:1px;background:#fff;"></div>
<div class="c" style="left:5px;top:365px;width:26px;height:15px;overflow:hidden;text-align:center;font-size:13px;line-height:15px;">14</div>
<div style="left:4px;top:398px;width:27px;height:1px;background:#ACA899;"></div>
<div style="left:6px;top:382px;width:25px;height:1px;background:#fff;"></div>
<div class="c" style="left:5px;top:383px;width:26px;height:15px;overflow:hidden;text-align:center;font-size:13px;line-height:15px;">15</div>
<div style="left:4px;top:415px;width:27px;height:1px;background:#ACA899;"></div>
<div style="left:6px;top:399px;width:25px;height:1px;background:#fff;"></div>
<div class="c" style="left:5px;top:400px;width:26px;height:15px;overflow:hidden;text-align:center;font-size:13px;line-height:15px;">16</div>
<div style="left:4px;top:432px;width:27px;height:1px;background:#ACA899;"></div>
<div style="left:6px;top:416px;width:25px;height:1px;background:#fff;"></div>
<div class="c" style="left:5px;top:417px;width:26px;height:15px;overflow:hidden;text-align:center;font-size:13px;line-height:15px;">17</div>
<div style="left:4px;top:449px;width:27px;height:1px;background:#ACA899;"></div>
<div style="left:6px;top:433px;width:25px;height:1px;background:#fff;"></div>
<div class="c" style="left:5px;top:434px;width:26px;height:15px;overflow:hidden;text-align:center;font-size:13px;line-height:15px;">18</div>
<div style="left:4px;top:466px;width:27px;height:1px;background:#ACA899;"></div>
<div style="left:6px;top:450px;width:25px;height:1px;background:#fff;"></div>
<div class="c" style="left:5px;top:451px;width:26px;height:15px;overflow:hidden;text-align:center;font-size:13px;line-height:15px;">19</div>
<div style="left:4px;top:483px;width:27px;height:1px;background:#ACA899;"></div>
<div style="left:6px;top:467px;width:25px;height:1px;background:#fff;"></div>
<div class="c" style="left:5px;top:468px;width:26px;height:15px;overflow:hidden;text-align:center;font-size:13px;line-height:15px;">20</div>
<div style="left:4px;top:500px;width:27px;height:1px;background:#ACA899;"></div>
<div style="left:6px;top:484px;width:25px;height:1px;background:#fff;"></div>
<div class="c" style="left:5px;top:485px;width:26px;height:15px;overflow:hidden;text-align:center;font-size:13px;line-height:15px;">21</div>
<div style="left:6px;top:501px;width:25px;height:1px;background:#fff;"></div>
<div class="c" style="left:5px;top:502px;width:26px;height:5px;overflow:hidden;text-align:center;font-size:13px;line-height:15px;">22</div>
<div class="c" style="left:32px;top:141px;width:67px;text-align:right;font-weight:bold;font-size:13px;color:#FF0000;padding-right:1px;">Wing</div>
<div class="c" style="left:102px;top:141px;width:63px;text-align:right;font-weight:bold;font-size:13.1px;color:#FF0000;">Tail</div>
<div style="left:32px;top:154px;width:136px;height:2px;background:#000;"></div>
<div class="c" style="left:32px;top:157px;width:67px;text-align:right;">10.4</div>
<div class="c" style="left:102px;top:157px;width:63px;text-align:right;">7.4</div>
<div class="c" style="left:32px;top:174px;width:67px;text-align:right;">10.8</div>
<div class="c" style="left:102px;top:174px;width:63px;text-align:right;">7.6</div>
<div class="c" style="left:32px;top:191px;width:67px;text-align:right;">11.1</div>
<div class="c" style="left:102px;top:191px;width:63px;text-align:right;">7.9</div>
<div class="c" style="left:32px;top:208px;width:67px;text-align:right;">10.2</div>
<div class="c" style="left:102px;top:208px;width:63px;text-align:right;">7.2</div>
<div class="c" style="left:32px;top:226px;width:67px;text-align:right;">10.3</div>
<div class="c" style="left:102px;top:226px;width:63px;text-align:right;">7.4</div>
<div class="c" style="left:32px;top:243px;width:67px;text-align:right;">10.2</div>
<div class="c" style="left:102px;top:243px;width:63px;text-align:right;">7.1</div>
<div class="c" style="left:32px;top:260px;width:67px;text-align:right;">10.7</div>
<div class="c" style="left:102px;top:260px;width:63px;text-align:right;">7.4</div>
<div class="c" style="left:32px;top:278px;width:67px;text-align:right;">10.5</div>
<div class="c" style="left:102px;top:278px;width:63px;text-align:right;">7.2</div>
<div class="c" style="left:32px;top:295px;width:67px;text-align:right;">10.8</div>
<div class="c" style="left:102px;top:295px;width:63px;text-align:right;">7.8</div>
<div class="c" style="left:32px;top:313px;width:67px;text-align:right;">11.2</div>
<div class="c" style="left:102px;top:313px;width:63px;text-align:right;">7.7</div>
<div class="c" style="left:32px;top:330px;width:67px;text-align:right;">10.6</div>
<div class="c" style="left:102px;top:330px;width:63px;text-align:right;">7.8</div>
<div class="c" style="left:32px;top:347px;width:67px;text-align:right;">11.4</div>
<div class="c" style="left:102px;top:347px;width:63px;text-align:right;">8.3</div>
<div style="left:32px;top:380px;width:136px;height:2px;background:#808080;"></div>
<div class="c" style="left:34px;top:383px;font-weight:bold;font-size:13.33px;color:#808080;letter-spacing:0.09px;">Example 19.1a and data from:</div>
<div class="c" style="left:34px;top:400px;color:#808080;letter-spacing:0.06px;">Zar JH (1999) Biostatistical Analysis</div>
<div class="c" style="left:34px;top:417px;color:#808080;letter-spacing:-0.06px;">Prentice Hall, Upper Saddle River</div>
<div style="left:303px;top:155px;width:193px;height:243px;background:#CCFFCC;"></div>
<div style="left:303px;top:155px;width:193px;height:34px;background:#008000;"></div>
<div style="left:303px;top:381px;width:193px;height:18px;background:#008000;"></div>
<div class="c" style="left:303px;top:157px;width:193px;height:15px;overflow:hidden;font-weight:bold;font-size:13.2px;color:#fff;"><div style="left:2.94px;top:0;letter-spacing:-0.037px;">Pearson</div><div style="left:59.67px;top:0;letter-spacing:-0.057px;">Correlation</div><div style="left:134.44px;top:0;letter-spacing:-0.472px;">Results</div><div style="left:182.90px;top:0;letter-spacing:0.000px;">for:</div></div>
<div class="c" style="left:303px;top:174px;width:193px;height:15px;overflow:hidden;font-weight:bold;font-size:13.2px;color:#fff;"><div style="left:3.73px;top:0;letter-spacing:0.225px;">Variable</div><div style="left:61.34px;top:0;letter-spacing:-0.185px;">Range</div><div style="left:106.07px;top:0;letter-spacing:0.000px;">=</div><div style="left:117.94px;top:0;letter-spacing:-1.138px;">Ex1</div><div style="left:144.94px;top:0;letter-spacing:0.000px;">Bivariate</div></div>
<div class="c" style="left:303px;top:208px;width:193px;height:15px;overflow:hidden;font-weight:bold;font-size:13.2px;color:#008000;"><div style="left:3.57px;top:0;letter-spacing:-0.057px;">Correlation</div><div style="left:78.24px;top:0;letter-spacing:-0.130px;">Matrix</div><div style="left:122.27px;top:0;letter-spacing:-1.031px;">(R)</div></div>
<div class="c" style="left:303px;top:295px;width:193px;height:15px;overflow:hidden;font-weight:bold;font-size:13.2px;color:#008000;"><div style="left:3.57px;top:0;letter-spacing:-0.057px;">Correlation</div><div style="left:78.94px;top:0;letter-spacing:-0.032px;">Significance</div><div style="left:161.87px;top:0;letter-spacing:-0.468px;">(P)</div></div>
<div style="left:303px;top:223px;width:193px;height:2px;background:#000;"></div>
<div style="left:303px;top:241px;width:193px;height:1px;background:#000;"></div>
<div style="left:303px;top:275px;width:193px;height:2px;background:#000;"></div>
<div class="c" style="left:363px;top:226px;width:68px;height:15px;overflow:hidden;color:#008000;">Wing Length</div>
<div class="c" style="left:431px;top:226px;width:64px;text-align:center;color:#008000;">Tail Length</div>
<div class="c" style="left:306px;top:243px;width:61px;overflow:hidden;color:#008000;height:15px;">Wing Length</div>
<div class="c" style="left:306px;top:260px;width:61px;overflow:hidden;color:#008000;height:15px;">Tail Length</div>
<div style="left:303px;top:310px;width:193px;height:2px;background:#000;"></div>
<div style="left:303px;top:328px;width:193px;height:1px;background:#000;"></div>
<div style="left:303px;top:362px;width:193px;height:2px;background:#000;"></div>
<div class="c" style="left:363px;top:313px;width:68px;height:15px;overflow:hidden;color:#008000;">Wing Length</div>
<div class="c" style="left:431px;top:313px;width:64px;text-align:center;color:#008000;">Tail Length</div>
<div class="c" style="left:306px;top:330px;width:61px;overflow:hidden;color:#008000;height:15px;">Wing Length</div>
<div class="c" style="left:306px;top:347px;width:61px;overflow:hidden;color:#008000;height:15px;">Tail Length</div>
<div class="c" style="left:367px;top:243px;width:62px;text-align:right;">1.000</div>
<div class="c" style="left:431px;top:243px;width:61px;text-align:right;">0.870</div>
<div class="c" style="left:367px;top:260px;width:62px;text-align:right;">0.870</div>
<div class="c" style="left:431px;top:260px;width:61px;text-align:right;">1.000</div>
<div class="c" style="left:367px;top:330px;width:62px;text-align:right;">-</div>
<div class="c" style="left:431px;top:330px;width:61px;text-align:right;">0.000</div>
<div class="c" style="left:367px;top:347px;width:62px;text-align:right;">0.000</div>
<div class="c" style="left:431px;top:347px;width:61px;text-align:right;">-</div>
<div style="left:559px;top:155px;width:201px;height:227px;background:#CCFFCC;border:1px solid #000;"></div>
<div class="c" style="left:559px;top:168px;width:201px;text-align:center;font-weight:bold;font-size:13.3px;line-height:16px;">Scatter Plot</div>
<svg style="left:0;top:0" width="804" height="548"><path d="M623.5 212V317" stroke="#000" stroke-width="1"/><path d="M623 316.5H734" stroke="#000" stroke-width="1"/><path d="M620 212.5H623" stroke="#000"/><path d="M620 247.5H623" stroke="#000"/><path d="M620 282.5H623" stroke="#000"/><path d="M620 317.5H623" stroke="#000"/><path d="M623.5 317V320" stroke="#000"/><path d="M660.5 317V320" stroke="#000"/><path d="M697.5 317V320" stroke="#000"/><path d="M733.5 317V320" stroke="#000"/><circle cx="652.4" cy="288.7" r="1.9" fill="#000080"/><circle cx="681.9" cy="274.7" r="1.9" fill="#000080"/><circle cx="704.0" cy="253.7" r="1.9" fill="#000080"/><circle cx="637.7" cy="302.7" r="1.9" fill="#000080"/><circle cx="645.1" cy="288.7" r="1.9" fill="#000080"/><circle cx="637.7" cy="309.7" r="1.9" fill="#000080"/><circle cx="674.5" cy="288.7" r="1.9" fill="#000080"/><circle cx="659.8" cy="302.7" r="1.9" fill="#000080"/><circle cx="681.9" cy="260.7" r="1.9" fill="#000080"/><circle cx="711.3" cy="267.7" r="1.9" fill="#000080"/><circle cx="667.2" cy="260.7" r="1.9" fill="#000080"/><circle cx="726.0" cy="225.7" r="1.9" fill="#000080"/></svg>
<div class="c" style="left:590px;top:206.2px;width:24.5px;text-align:right;font-size:10.7px;line-height:13px;">8.5</div>
<div class="c" style="left:590px;top:241.2px;width:24.5px;text-align:right;font-size:10.7px;line-height:13px;">8.0</div>
<div class="c" style="left:590px;top:276.2px;width:24.5px;text-align:right;font-size:10.7px;line-height:13px;">7.5</div>
<div class="c" style="left:590px;top:311.2px;width:24.5px;text-align:right;font-size:10.7px;line-height:13px;">7.0</div>
<div class="c" style="left:603.7px;top:326px;width:40px;text-align:center;font-size:10.7px;line-height:13px;">10.0</div>
<div class="c" style="left:640.5px;top:326px;width:40px;text-align:center;font-size:10.7px;line-height:13px;">10.5</div>
<div class="c" style="left:677.3px;top:326px;width:40px;text-align:center;font-size:10.7px;line-height:13px;">11.0</div>
<div class="c" style="left:714.1px;top:326px;width:40px;text-align:center;font-size:10.7px;line-height:13px;">11.5</div>
<div class="c" style="left:618px;top:346px;width:120px;text-align:center;font-size:13px;line-height:16px;">Wing Length</div>
<div class="c" style="left:526px;top:256px;width:120px;height:16px;text-align:center;font-size:13px;line-height:16px;transform:rotate(-90deg);">Tail Length</div>
<div style="left:620px;top:209px;width:6px;height:6px;background:#330033;"></div>
<div style="left:621px;top:212px;width:2px;height:2px;background:#CCFFCC;"></div>
<div style="left:609px;top:284px;width:122px;height:54px;background:#ECE9D8;border:1px solid;border-color:#ECE9D8 #404040 #404040 #ECE9D8;"></div>
<div style="left:610px;top:285px;width:120px;height:52px;border:1px solid;border-color:#fff #ACA899 #ACA899 #fff;"></div>
<div style="left:632px;top:287px;width:97px;height:19px;background:#316AC5;"></div>
<div style="left:612px;top:287px;width:19px;height:19px;background:#ECE9D8;border:1px solid;border-color:#fff #ACA899 #ACA899 #fff;"></div>
<svg style="left:612px;top:287px" width="18" height="18" viewBox="0 0 18 18"><path d="M1.500 5.500h11v10h-11z" fill="#fff" stroke="#000" stroke-width="1.200"/><path d="M1.500 15.500h11" stroke="#000" stroke-width="1.600"/><path d="M3.500 11.500h2M6.500 11.500h4.500M3.500 13.500h2M6.500 13.500h4.500" stroke="#000" stroke-width="1"/><path d="M8 2.500h6.500v4l-2 1.200H9.500z" fill="#C0C0C0"/><path d="M7.500 2.500h7" stroke="#000" stroke-width="1.200"/><path d="M3.500 8.500L8 3l3.500 5.500" fill="none" stroke="#202020" stroke-width="1.900"/><path d="M4 8.500L8 3.800l3 4.700" fill="none" stroke="#fff" stroke-width=".7" stroke-dasharray="1 1.200"/><path d="M15 2h2v6.500l-2-1.500z" fill="#000080"/></svg>
<div class="t cm1" style="left:633px;top:290px;color:#fff;">F<span class="u">o</span>rmat Axis...</div>
<div style="left:612px;top:310px;width:116px;height:1px;background:#ACA899;"></div>
<div style="left:612px;top:311px;width:116px;height:1px;background:#fff;"></div>
<div class="t cm2" style="left:633px;top:319.5px;">Cle<span class="u">a</span>r</div>
<svg style="left:716px;top:293.500px" width="13" height="22" viewBox="0 0 13 21" preserveAspectRatio="none"><path d="M0.500 0.500v16l3.700-3.600 2.900 6.800 2.600-1.100-2.900-6.600h5.200z" fill="#fff" stroke="#000" stroke-width="1"/></svg>
<div style="left:782px;top:123px;width:18px;height:384px;background:#ECE9D8;"></div>
<div style="left:782px;top:123px;width:16px;height:5px;background:#ECE9D8;"></div>
<div style="left:783px;top:124px;width:15px;height:4px;background:#ECE9D8;border:1px solid;border-color:#fff #ACA899 #ACA899 #fff;"></div>
<div style="left:782px;top:128px;width:16px;height:1px;background:#000;"></div>
<div style="left:781px;top:126px;width:1px;height:10px;background:#000;"></div>
<div class="btn2" style="left:782px;top:129px;width:16px;height:16px;"></div>
<svg style="left:787px;top:135px" width="8" height="4.500"><path d="M0 4.500L4 0 8 4.500z" fill="#000"/></svg>
<div style="left:783px;top:145px;width:15px;height:330px;background:#ECE9D8;border:1px solid;border-color:#fff #ACA899 #ACA899 #fff;"></div>
<div style="left:798px;top:123px;width:2px;height:400px;background:#fff;"></div>
<div style="left:782px;top:475px;width:16px;height:17px;background-color:#fff;background-image:linear-gradient(45deg,#000 25%,transparent 25%,transparent 75%,#000 75%),linear-gradient(45deg,#000 25%,transparent 25%,transparent 75%,#000 75%);background-size:2px 2px;background-position:0 0,1px 1px;"></div>
<div class="btn2" style="left:782px;top:492px;width:16px;height:15px;"></div>
<svg style="left:787px;top:497.500px" width="8" height="4.500"><path d="M0 0h8L4 4.500z" fill="#000"/></svg>
<div style="left:4px;top:507px;width:796px;height:16px;background:#ECE9D8;"></div>
<div style="left:6px;top:507px;width:15px;height:16px;background:#ECE9D8;border:1px solid;border-color:#fff #ACA899 #ACA899 #fff;"></div>
<div style="left:21px;top:507px;width:16px;height:16px;background:#ECE9D8;border:1px solid;border-color:#fff #ACA899 #ACA899 #fff;"></div>
<div style="left:37px;top:507px;width:16px;height:16px;background:#ECE9D8;border:1px solid;border-color:#fff #ACA899 #ACA899 #fff;"></div>
<div style="left:53px;top:507px;width:16px;height:16px;background:#ECE9D8;border:1px solid;border-color:#fff #ACA899 #ACA899 #fff;"></div>
<svg style="left:6px;top:509px" width="14" height="13"><path d="M3.700 2v9" stroke="#000" stroke-width="1.500"/><path d="M10 2v9l-5-4.500z" fill="#000"/></svg>
<svg style="left:22px;top:509px" width="14" height="13"><path d="M9.500 2v9l-5-4.500z" fill="#000"/></svg>
<svg style="left:38px;top:509px" width="14" height="13"><path d="M4.500 2v9l5-4.500z" fill="#000"/></svg>
<svg style="left:54px;top:509px" width="14" height="13"><path d="M10.300 2v9" stroke="#000" stroke-width="1.500"/><path d="M4 2v9l5-4.500z" fill="#000"/></svg>
<svg style="left:0;top:507px" width="804" height="17"><path d="M70 0H168L161 15.500H78z" fill="#fff"/><path d="M78 15.500H162" fill="none" stroke="#808080" stroke-width="1"/><path d="M70.500 0L78 15.500" fill="none" stroke="#000" stroke-width="1"/><path d="M70 0.500H72" stroke="#000"/><path d="M170 0.500H539" stroke="#808080" stroke-width="1"/><path d="M163 15.500L170 0.500" fill="none" stroke="#000" stroke-width="1"/><path d="M164 10L167 15.500" fill="none" stroke="#000" stroke-width="1"/><path d="M271 15.500L278 0.500" fill="none" stroke="#000" stroke-width="1"/><path d="M272 10L275 15.500" fill="none" stroke="#000" stroke-width="1"/><path d="M349 15.500L356 0.500" fill="none" stroke="#000" stroke-width="1"/><path d="M350 10L353 15.500" fill="none" stroke="#000" stroke-width="1"/><path d="M436 15.500L443 0.500" fill="none" stroke="#000" stroke-width="1"/><path d="M437 10L440 15.500" fill="none" stroke="#000" stroke-width="1"/><path d="M532 15.500L539 0.500" fill="none" stroke="#000" stroke-width="1"/></svg>
<div class="t tb0" style="left:79px;top:509px;font-weight:bold;font-size:12.6px;line-height:14px;">Ex1 Bivariate</div>
<div class="t tbi" style="left:177px;top:509px;font-size:12px;line-height:14px;">Ex2 Multivariate</div>
<div class="t tbi" style="left:285px;top:509px;font-size:12px;line-height:14px;">Ex3 Partial</div>
<div class="t tbi" style="left:363px;top:509px;font-size:12px;line-height:14px;">Ex4 Multiple</div>
<div class="t tbi" style="left:450px;top:509px;font-size:12px;line-height:14px;">Ex5 Canonical</div>
<div style="left:556px;top:507px;width:1px;height:16px;background:#fff;"></div>
<div style="left:558px;top:507px;width:1px;height:16px;background:#ACA899;"></div>
<div style="left:559px;top:507px;width:2px;height:16px;background:#000;"></div>
<div class="btn2" style="left:562px;top:507px;width:15px;height:16px;"></div>
<svg style="left:566px;top:511.500px" width="4" height="7"><path d="M4 0v7L0 3.500z" fill="#000"/></svg>
<div style="left:577px;top:507px;width:167px;height:16px;background:#ECE9D8;border:1px solid;border-color:#fff #8F8C7C #8F8C7C #fff;"></div>
<div style="left:744px;top:507px;width:16px;height:16px;background-color:#fff;background-image:linear-gradient(45deg,#000 25%,transparent 25%,transparent 75%,#000 75%),linear-gradient(45deg,#000 25%,transparent 25%,transparent 75%,#000 75%);background-size:2px 2px;background-position:0 0,1px 1px;"></div>
<div class="btn2" style="left:761px;top:507px;width:15px;height:16px;"></div>
<svg style="left:767px;top:511.500px" width="4" height="7"><path d="M0 0v7l4-3.500z" fill="#000"/></svg>
<div style="left:777px;top:507px;width:1px;height:16px;background:#fff;"></div>
<div style="left:780px;top:507px;width:1px;height:16px;background:#ACA899;"></div>
<div style="left:782px;top:507px;width:18px;height:16px;background:#ECE9D8;"></div>
<div style="left:782px;top:507px;width:1px;height:16px;background:#000;"></div>
<div style="left:782px;top:507px;width:16px;height:1px;background:#000;"></div>
<div style="left:4px;top:523px;width:796px;height:21px;background:#ECE9D8;"></div>
<div class="t rdy" style="left:10px;top:529px;font-size:12px;line-height:14px;">Ready</div>
<div style="left:4px;top:524px;width:796px;height:1px;background:#fff;"></div>
<div style="left:412px;top:526px;width:2px;height:17px;background:#fff;"></div>
<div class="sunk" style="left:420px;top:527px;width:34px;height:15px;"></div>
<div class="sunk" style="left:456px;top:527px;width:129px;height:15px;"></div>
<div class="sunk" style="left:588px;top:527px;width:27px;height:15px;"></div>
<div class="sunk" style="left:618px;top:527px;width:35px;height:15px;"></div>
<div class="sunk" style="left:655px;top:527px;width:30px;height:15px;"></div>
<div class="sunk" style="left:687px;top:527px;width:33px;height:15px;"></div>
<div class="sunk" style="left:722px;top:527px;width:29px;height:15px;"></div>
<div class="sunk" style="left:753px;top:527px;width:24px;height:15px;"></div>
<div class="t num" style="left:656px;top:529px;font-size:12px;line-height:14px;">NUM</div>
<svg style="left:784px;top:528px" width="15" height="15"><path d="M14 1L1 14M14 5L5 14M14 9L9 14" stroke="#ACA899" stroke-width="1.500"/><path d="M14 2.500L2.500 14M14 6.500L6.500 14M14 10.500L10.500 14" stroke="#fff" stroke-width="1"/></svg>
<div style="left:4px;top:122px;width:1px;height:401px;background:#B5B19F;"></div>
<div style="left:5px;top:122px;width:1px;height:401px;background:#7A776A;"></div>
</div>
</body></html>
